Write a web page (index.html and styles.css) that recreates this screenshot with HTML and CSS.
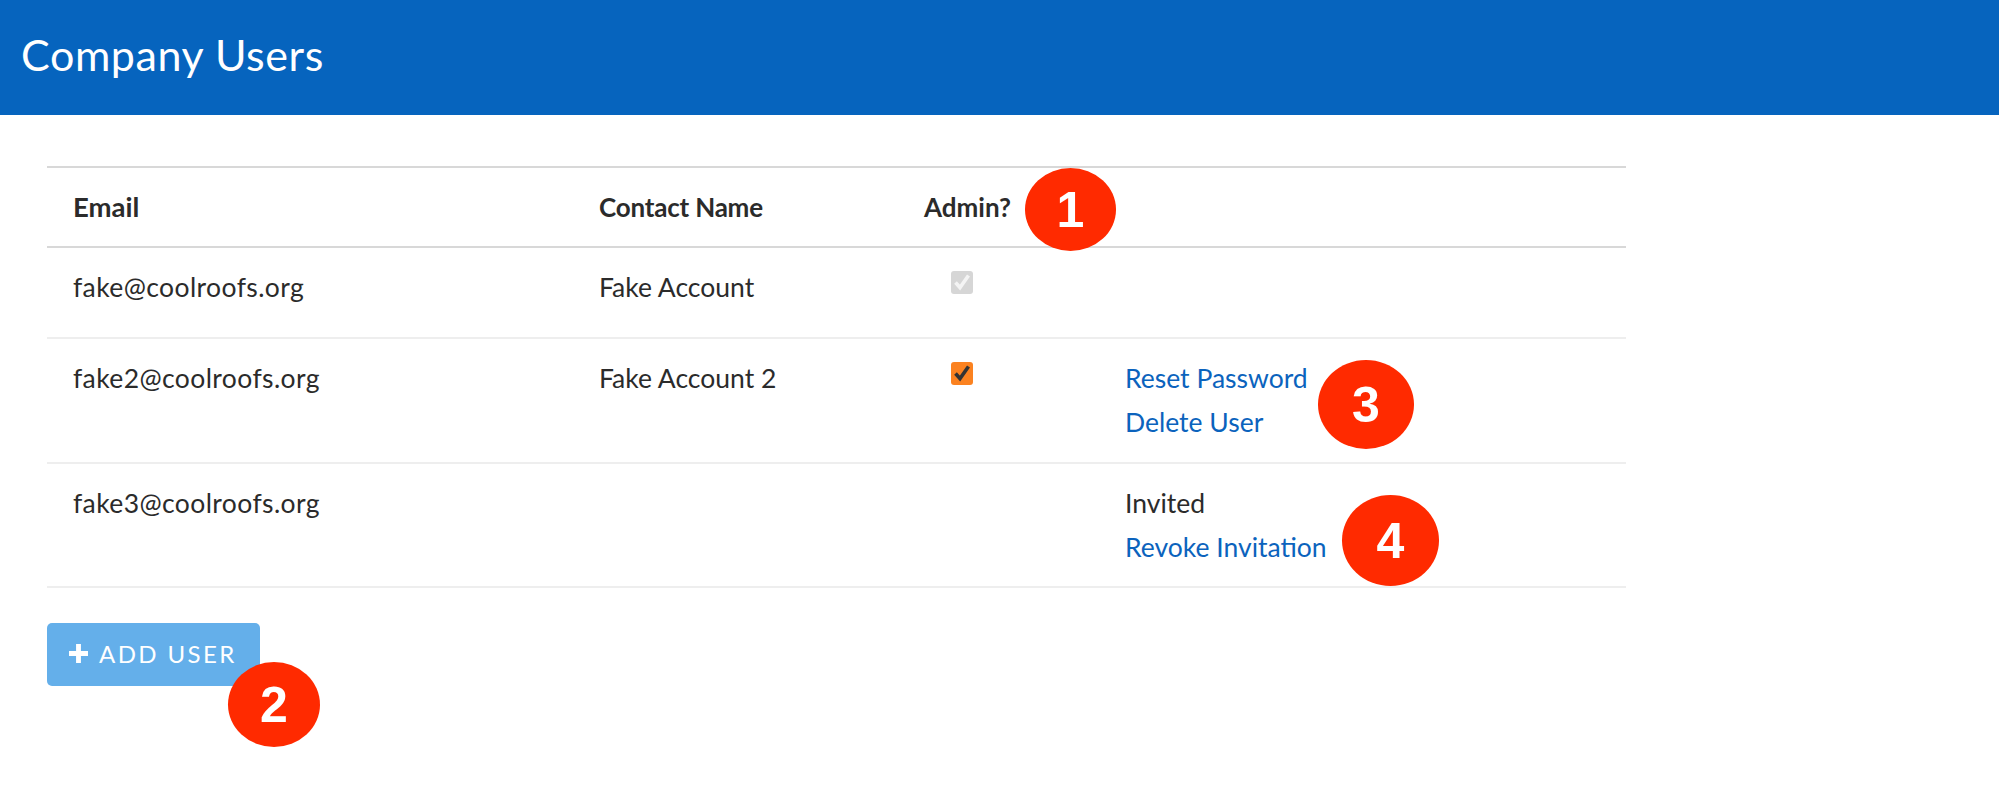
FILE: index.html
```html
<!DOCTYPE html>
<html lang="en">
<head>
<meta charset="utf-8">
<title>Company Users</title>
<link rel="stylesheet" href="styles.css">
</head>
<body>
<header class="topbar"><h1 class="title">Company Users</h1></header>
<main class="content">
  <table class="users">
    <colgroup><col class="c-email"><col class="c-name"><col class="c-admin"><col class="c-actions"></colgroup>
    <thead>
      <tr><th class="th-email">Email</th><th class="th-name">Contact Name</th><th>Admin?</th><th></th></tr>
    </thead>
    <tbody>
      <tr class="row-one">
        <td class="email">fake@coolroofs.org</td>
        <td>Fake Account</td>
        <td><span class="check check-off"><svg viewBox="0 0 22 22" width="22" height="22"><path d="M4.5 11.5 9 16.5 17.5 4.5" fill="none" stroke="#f4f4f4" stroke-width="3.6"/></svg></span></td>
        <td></td>
      </tr>
      <tr>
        <td class="email">fake2@coolroofs.org</td>
        <td>Fake Account 2</td>
        <td><span class="check check-on"><svg viewBox="0 0 22 22" width="22" height="22"><path d="M4.5 11.5 9 16.5 17.5 4.5" fill="none" stroke="#333" stroke-width="3.6"/></svg></span></td>
        <td><div class="actions"><a class="link" href="#">Reset Password</a><a class="link" href="#">Delete User</a></div></td>
      </tr>
      <tr class="row-last">
        <td class="email">fake3@coolroofs.org</td>
        <td></td>
        <td></td>
        <td><div class="actions"><span>Invited</span><a class="link" href="#">Revoke Invitation</a></div></td>
      </tr>
    </tbody>
  </table>
  <button class="add" type="button"><svg class="plus" viewBox="0 0 18 18" width="19" height="19"><path d="M9 0v18M0 9h18" stroke="#fff" stroke-width="4.6" fill="none"/></svg>ADD USER</button>
</main>
<div class="badge b1">1</div>
<div class="badge b2">2</div>
<div class="badge b3">3</div>
<div class="badge b4">4</div>
</body>
</html>
```
FILE: styles.css
```css
* { box-sizing: border-box; }
html, body { margin: 0; padding: 0; background: #fff; }
body { font-family: "Lato", "Noto Sans", sans-serif; font-size: 26.5px; line-height: 36px; color: #2b2b2b; }
.topbar { height: 115px; background: #0664be; display: flex; align-items: center; padding: 0 0 6px 21px; }
.title { margin: 0; font-family: "Lato", sans-serif; font-weight: 400; font-size: 43px; letter-spacing: 0.6px; line-height: 50px; color: #fff; }
.content { padding: 51px 0 0 47px; }
.users { width: 1579px; table-layout: fixed; border-collapse: collapse; }
.c-email { width: 526px; }
.c-name { width: 325px; }
.c-admin { width: 201px; }
.users th { height: 80px; padding: 0 26px; text-align: left; font-size: 26px; font-weight: 700; border-top: 2px solid #d8d8d8; border-bottom: 2px solid #d8d8d8; }
.users .th-email { font-size: 27.5px; }
.users .th-name { letter-spacing: -0.2px; }
.users td { padding: 21px 26px 22px; vertical-align: top; border-bottom: 2px solid #eeeeee; }
.users .row-one td { padding-bottom: 32px; }
.users .row-last td { padding-bottom: 21px; }
.users .email { letter-spacing: 0.4px; }
.actions { display: flex; flex-direction: column; gap: 8px; }
.link { color: #0b63bd; text-decoration: none; }
.check { display: block; width: 22px; height: 23px; margin: 2px 0 0 27px; border-radius: 3px; }
.check svg { display: block; }
.check-off { background: #d6d6d6; }
.check-on { background: #fb8220; }
.add { display: flex; align-items: center; gap: 11px; width: 213px; height: 63px; margin-top: 35px; padding: 0 0 3px 22px; border: 0; border-radius: 5px; background: #64afea; color: #fff; font-family: "Lato", sans-serif; font-size: 24px; letter-spacing: 2.4px; }
.badge { position: absolute; display: flex; align-items: center; justify-content: center; border-radius: 50%; background: #ff2a00; color: #fff; font-family: "Liberation Sans", sans-serif; font-weight: 700; font-size: 50px; line-height: 1; }
.b1 { left: 1025px; top: 168px; width: 91px; height: 83px; }
.b2 { left: 228px; top: 662px; width: 92px; height: 85px; }
.b3 { left: 1318px; top: 360px; width: 96px; height: 89px; }
.b4 { left: 1342px; top: 495px; width: 97px; height: 91px; }
```
